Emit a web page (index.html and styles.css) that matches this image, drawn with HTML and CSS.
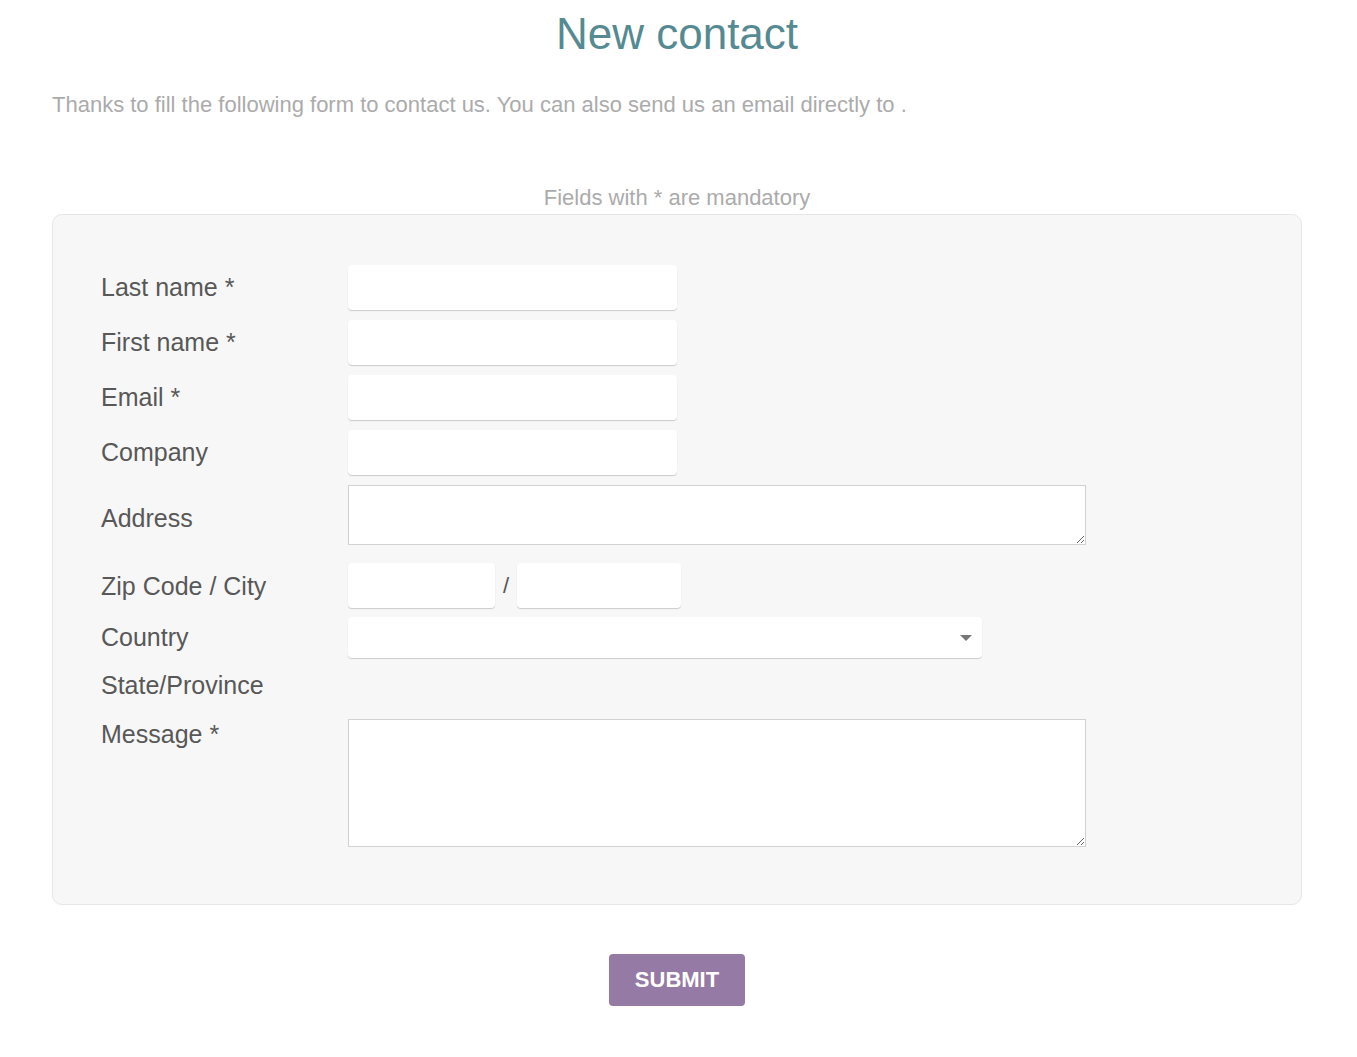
FILE: index.html
```html
<!DOCTYPE html>
<html lang="en">
<head>
    <meta charset="UTF-8">
    <meta name="viewport" content="width=device-width, initial-scale=1.0">
    <title>New contact</title>
    <link rel="stylesheet" href="styles.css">
</head>

<body>
    <div class="page">
        <h1 class="title">New contact</h1>
        <p class="intro">Thanks to fill the following form to contact us. You can also send us an email directly to .</p>
        <p class="mandatory">Fields with * are mandatory</p>

        <form class="contact-form">
            <div class="row">
                <label for="lastname">Last name *</label>
                <input type="text" id="lastname" class="field">
            </div>
            <div class="row">
                <label for="firstname">First name *</label>
                <input type="text" id="firstname" class="field">
            </div>
            <div class="row">
                <label for="email">Email *</label>
                <input type="text" id="email" class="field">
            </div>
            <div class="row">
                <label for="company">Company</label>
                <input type="text" id="company" class="field">
            </div>
            <div class="row row-address">
                <label for="address">Address</label>
                <textarea id="address" class="area area-small"></textarea>
            </div>
            <div class="row row-zip">
                <label for="zip">Zip Code / City</label>
                <input type="text" id="zip" class="field field-zip">
                <span class="slash">/</span>
                <input type="text" id="city" class="field field-city">
            </div>
            <div class="row row-country">
                <label for="country">Country</label>
                <div class="select-wrap">
                    <select id="country" class="select"></select>
                </div>
            </div>
            <div class="row row-state">
                <label>State/Province</label>
            </div>
            <div class="row row-message">
                <label for="message">Message *</label>
                <textarea id="message" class="area area-big"></textarea>
            </div>
        </form>

        <div class="actions">
            <button type="button" class="submit">SUBMIT</button>
        </div>
    </div>
</body>
</html>
```

FILE: styles.css
```css
body {
    font-family: "Liberation Sans", Arial, sans-serif;
    margin: 0;
    padding: 0;
    background-color: #fff;
}

.page {
    width: 1250px;
    margin-left: 52px;
}

.title {
    margin: 0;
    padding-top: 7px;
    text-align: center;
    font-size: 44px;
    line-height: 53px;
    font-weight: normal;
    color: #558a92;
}

.intro {
    margin: 32px 0 0 0;
    font-size: 22px;
    line-height: 25px;
    color: #ababab;
}

.mandatory {
    margin: 68px 0 4px 0;
    text-align: center;
    font-size: 22px;
    line-height: 25px;
    color: #ababab;
}

.contact-form {
    background-color: #f7f7f7;
    border: 1px solid #e6e6e6;
    border-radius: 10px;
    padding: 50px 48px 57px 48px;
}

.row {
    display: flex;
    align-items: center;
    margin-bottom: 10px;
}

.row label {
    width: 247px;
    flex-shrink: 0;
    font-size: 25px;
    line-height: 29px;
    color: #585858;
}

.field {
    box-sizing: border-box;
    width: 329px;
    height: 45px;
    border: none;
    border-radius: 4px;
    background-color: #fff;
    box-shadow: 0 1px 1px rgba(0, 0, 0, 0.18);
    padding: 0 10px;
    font-size: 18px;
    outline: none;
}

.field-zip {
    width: 147px;
}

.field-city {
    width: 164px;
}

.slash {
    width: 22px;
    text-align: center;
    font-size: 22px;
    color: #555;
}

.area {
    display: block;
    box-sizing: border-box;
    width: 738px;
    border: 1px solid #d2d2d2;
    border-radius: 0;
    background-color: #fff;
    margin: 0;
    font-size: 16px;
    outline: none;
}

.area-small {
    height: 60px;
}

.area-big {
    height: 128px;
}

.row-address {
    margin-bottom: 18px;
}

.row-address label {
    padding-top: 7px;
}

.row-zip {
    margin-bottom: 9px;
}

.row-zip label {
    padding-top: 2px;
}

.row-country {
    margin-bottom: 12px;
}

.row-state {
    margin-bottom: 19px;
}

.row-state label {
    padding-top: 1px;
}

.row-message {
    align-items: flex-start;
    margin-bottom: 0;
}

.row-message label {
    padding-top: 1px;
}

.select-wrap {
    position: relative;
    width: 634px;
    height: 41px;
}

.select {
    appearance: none;
    -webkit-appearance: none;
    box-sizing: border-box;
    width: 100%;
    height: 41px;
    border: none;
    border-radius: 4px;
    background-color: #fff;
    box-shadow: 0 1px 1px rgba(0, 0, 0, 0.18);
    outline: none;
}

.select-wrap::after {
    content: "";
    position: absolute;
    top: 18px;
    right: 10px;
    border-left: 6px solid transparent;
    border-right: 6px solid transparent;
    border-top: 6px solid #777;
}

.actions {
    margin-top: 49px;
    text-align: center;
}

.submit {
    background-color: #967aa6;
    color: #fff;
    border: none;
    border-radius: 4px;
    padding: 13px 26px;
    font-family: "Liberation Sans", Arial, sans-serif;
    font-size: 22px;
    font-weight: bold;
    line-height: 26px;
    cursor: pointer;
}
```
